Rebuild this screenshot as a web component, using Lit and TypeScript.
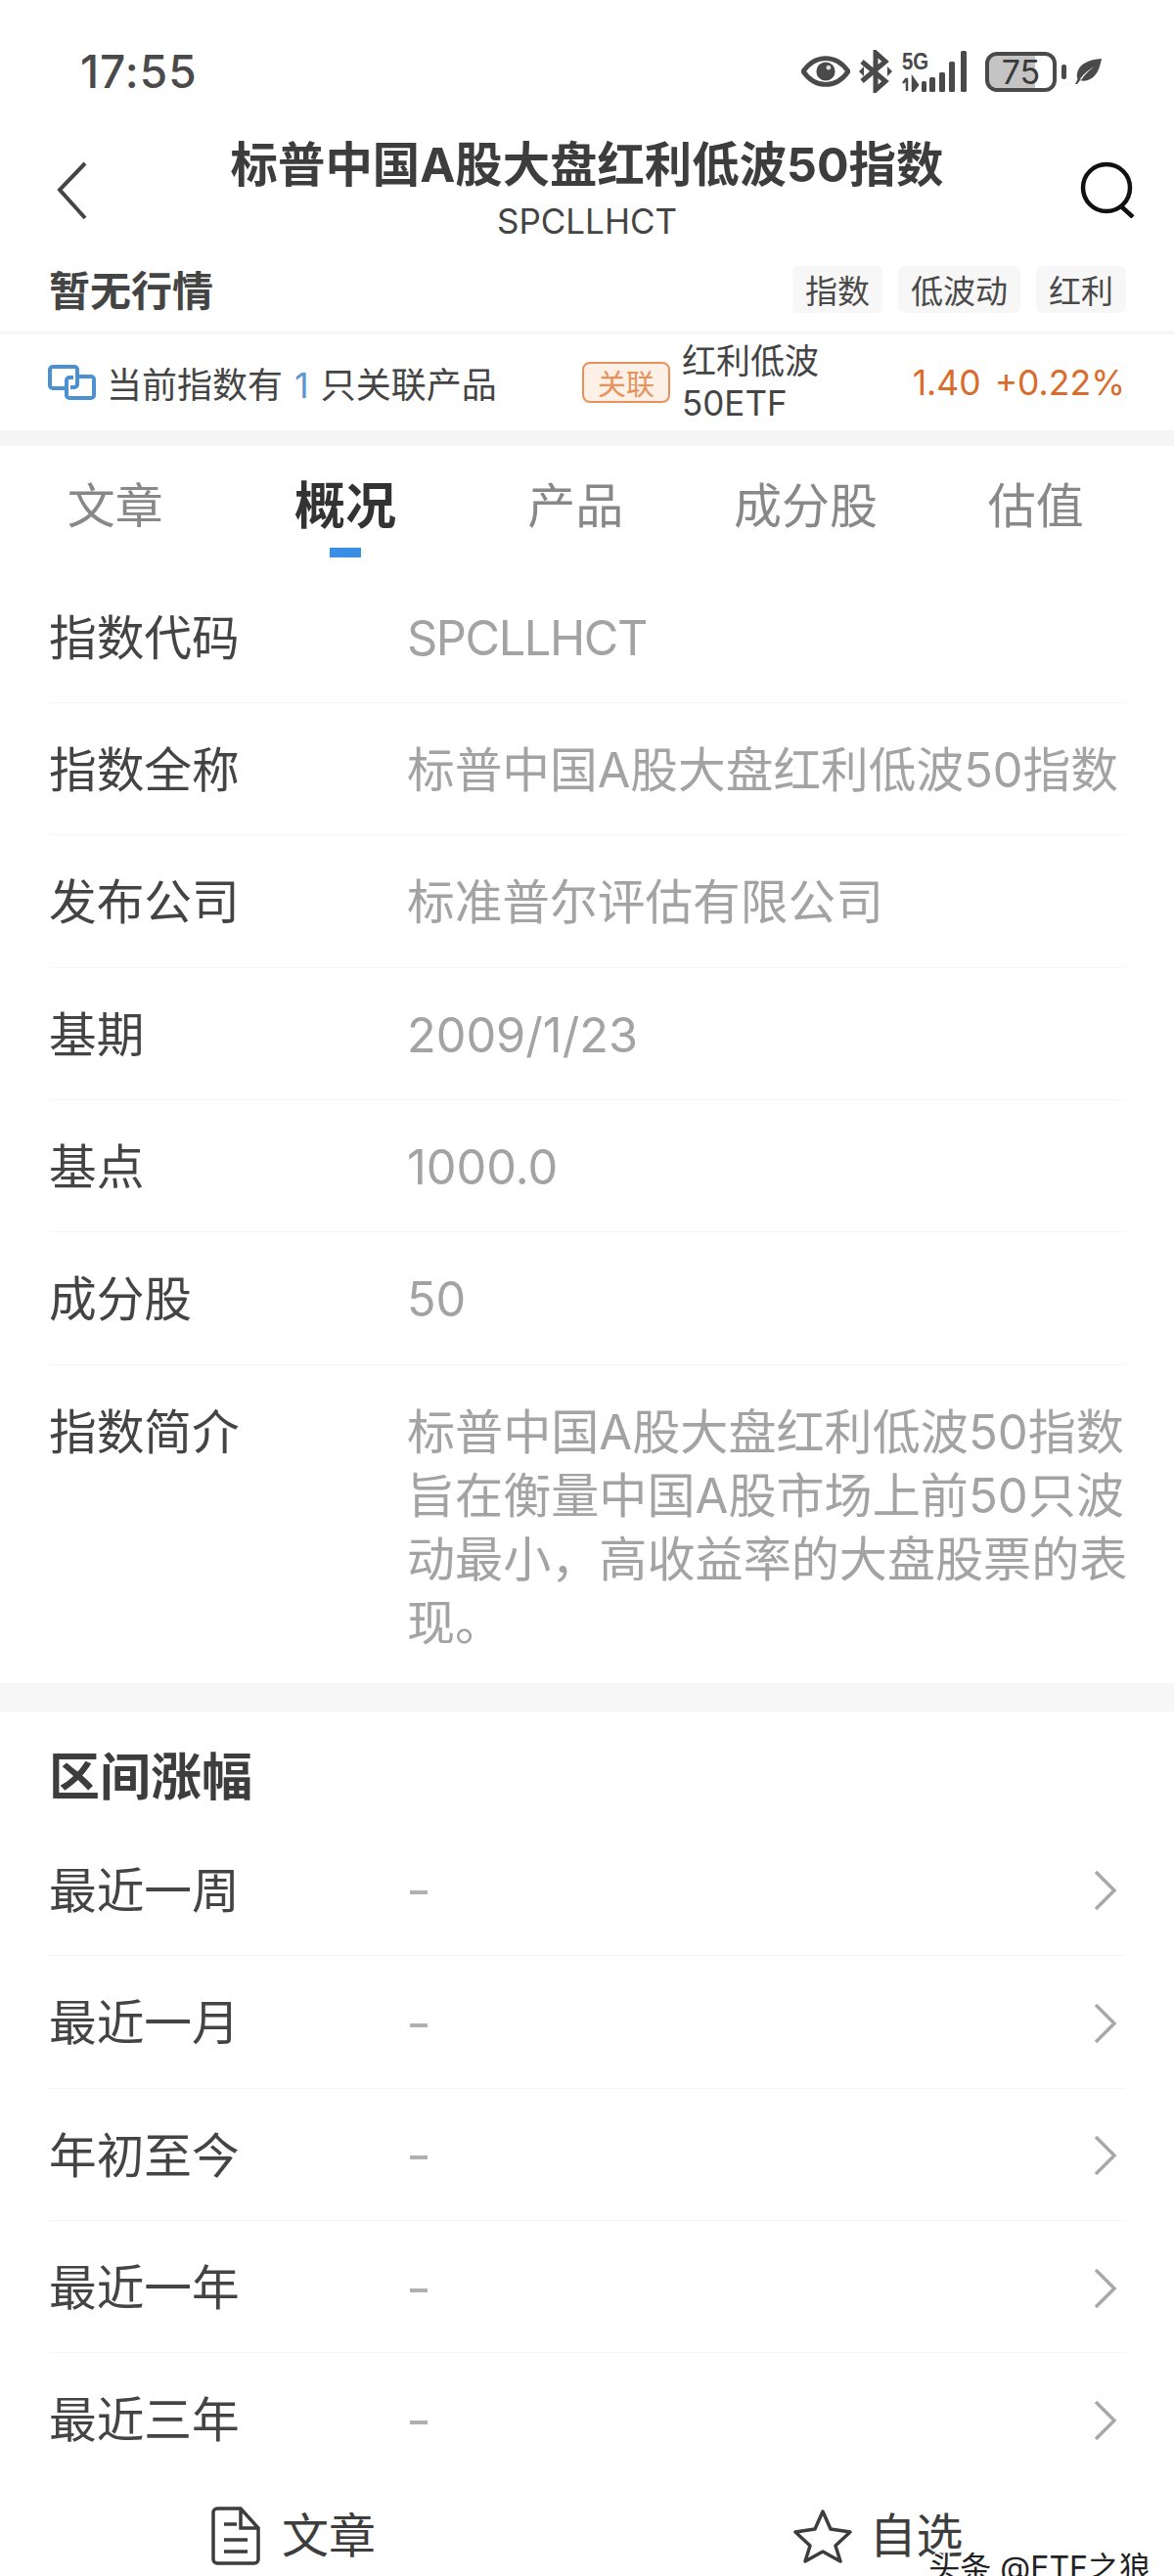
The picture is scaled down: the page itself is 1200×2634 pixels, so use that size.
import { LitElement, html, css } from "lit";
import { customElement } from "lit/decorators.js";

const details: [string, string][] = [
  ["指数代码", "SPCLLHCT"],
  ["指数全称", "标普中国A股大盘红利低波50指数"],
  ["发布公司", "标准普尔评估有限公司"],
  ["基期", "2009/1/23"],
  ["基点", "1000.0"],
  ["成分股", "50"],
];
const ranges = ["最近一周", "最近一月", "年初至今", "最近一年", "最近三年"];
const tabs = ["文章", "概况", "产品", "成分股", "估值"];

@customElement("app-root")
export class AppRoot extends LitElement {
  static styles = css`
    :host {
      display: block;
      position: relative;
      width: 1200px;
      height: 2634px;
      overflow: hidden;
      background: #fff;
      color: #444;
      font-family: "Inter", "Noto Sans CJK SC", sans-serif;
    }
    svg { display: block; flex: none; }
    .status {
      height: 114px;
      padding: 16px 74px 0 82px;
      display: flex;
      align-items: center;
      box-sizing: content-box;
    }
    .time { font-size: 46px; font-weight: 500; letter-spacing: 1px; color: #4a4a4a; }
    .status-icons { margin-left: auto; display: flex; align-items: center; }
    .gap-bt { margin-left: 9px; }
    .gap-nub { margin-left: 5px; }
    .gap-leaf { margin-left: 9px; }
    .five-g {
      font: 700 24px/22px "Liberation Sans", sans-serif;
      color: #4a4a4a;
      transform: scaleX(0.85);
      transform-origin: left top;
    }
    .signal { position: relative; width: 70px; height: 42px; margin-left: 10px; }
    .signal svg { position: absolute; left: 0; top: 0; }
    .signal .five-g { position: absolute; left: 0; top: 0; }
    .battery {
      position: relative;
      width: 73px;
      height: 41px;
      margin-left: 15px;
      box-sizing: border-box;
      border: 4px solid #4a4a4a;
      border-radius: 12px;
      overflow: hidden;
      background: linear-gradient(90deg, #c4c4c4 72%, #fff 72%);
      display: flex;
      align-items: center;
      justify-content: center;
      font-size: 34px;
      line-height: 33px;
      color: #3a3a3a;
    }
    .header { height: 120px; display: grid; grid-template-columns: 1fr auto 1fr; }
    .back { padding: 35px 0 0 58px; }
    .search { padding: 35px 40px 0 0; justify-self: end; }
    .title-box { text-align: center; padding-top: 9px; }
    .title { font-size: 48.4px; font-weight: 700; line-height: 60px; color: #3d3d3d; }
    .code { font-size: 35px; line-height: 42px; margin-top: 6px; color: #444; }
    .quote { height: 88px; padding: 0 49px 0 50px; display: flex; align-items: center; }
    .quote-label { font-size: 42px; font-weight: 700; color: #444; }
    .tags { margin-left: auto; display: flex; gap: 16px; margin-top: 3px; }
    .tag {
      height: 48px;
      padding: 0 13px;
      display: flex;
      align-items: center;
      background: #f7f7f7;
      border-radius: 6px;
      font-size: 33px;
      color: #4a4a4a;
    }
    .band-thin { height: 4px; background: #f7f7f7; }
    .band { height: 16px; background: #f5f5f5; }
    .band-big { height: 30px; background: #f7f7f7; }
    .link { height: 98px; padding: 0 50px 0 49px; display: flex; align-items: center; font-size: 36px; color: #444; }
    .link-left { display: flex; align-items: center; gap: 11px; width: 458px; flex: none; white-space: nowrap; }
    .link-count { color: #5b97cf; margin: 0 12px; }
    .rel {
      margin-left: 88px;
      width: 90px;
      height: 42px;
      box-sizing: border-box;
      border: 2px solid #e8915a;
      border-radius: 8px;
      background: #fdf0e6;
      color: #e8915a;
      font-size: 29px;
      display: flex;
      align-items: center;
      justify-content: center;
      flex: none;
    }
    .rel-name { margin-left: 12px; line-height: 43px; font-size: 35px; white-space: nowrap; }
    .price { margin-left: auto; color: #d96c2c; display: flex; gap: 14px; font-size: 35.5px; }
    .tabs { height: 127.5px; padding-top: 32px; box-sizing: border-box; display: grid; grid-template-columns: repeat(5, 235.3px); }
    .tab { display: flex; flex-direction: column; align-items: center; font-size: 49px; line-height: 60px; color: #888; }
    .tab.on { color: #333; font-weight: 700; font-size: 52px; }
    .tab.on::after { content: ""; width: 32px; height: 10px; margin-top: 12px; background: #3a8ee6; }
    .rows { padding: 0 50px; }
    .row {
      display: grid;
      grid-template-columns: 366px 1fr;
      padding: 36px 0 33.4px;
      border-bottom: 1px solid #f5f5f5;
      font-size: 48.7px;
      line-height: 65px;
      color: #444;
    }
    .row.last { border-bottom: 0; padding-bottom: 29.5px; }
    .value { color: #a3a3a3; white-space: nowrap; }
    .value.narrow { letter-spacing: -1.4px; }
    .value.wrap { white-space: normal; font-size: 49.1px; margin-right: -6px; }
    .section-title { padding: 37px 50px 16.5px; font-size: 52px; line-height: 60px; font-weight: 700; color: #3d3d3d; }
    .range { grid-template-columns: 366px 1fr auto; align-items: center; }
    .range.last { border-bottom: 0; }
    .dash { width: 18px; height: 4px; background: #b0b0b0; margin: 4px 0 0 3px; }
    .chev { margin-right: 8px; }
    .bar { display: grid; grid-template-columns: 1fr 1fr; padding-top: 26.5px; }
    .bar-item { display: flex; justify-content: center; align-items: center; gap: 22px; font-size: 48px; line-height: 60px; color: #3d3d3d; }
    .bar-item.fav { gap: 17px; padding-right: 4px; }
    .mark {
      position: absolute;
      right: 24px;
      bottom: -13px;
      font-size: 32px;
      line-height: 42px;
      color: #222;
      text-shadow: 2px 0 #fff, -2px 0 #fff, 0 2px #fff, 0 -2px #fff;
    }
  `;

  private statusIcons() {
    return html`<div class="status-icons">
      <svg width="50" height="34" viewBox="0 0 52 34">
        <path d="M2 17C9 7 17 3 26 3s17 4 24 14c-7 10-15 14-24 14S9 27 2 17z" fill="none" stroke="#4a4a4a" stroke-width="5" stroke-linejoin="round"/>
        <circle cx="26" cy="17" r="10" fill="#4a4a4a"/><circle cx="29" cy="13" r="2.5" fill="#ddd"/>
      </svg>
      <svg class="gap-bt" width="34" height="44" viewBox="0 0 34 44">
        <path d="M3 12l24 20-10 9V3l10 9L3 32" fill="none" stroke="#4a4a4a" stroke-width="5"/>
        <path d="M0 22l5-5v10zM34 22l-5-5v10z" fill="#4a4a4a"/>
      </svg>
      <div class="signal">
        <svg width="70" height="42" viewBox="0 0 70 42">
          <path d="M5 28v13M1 33l4-5M11 28v13l5-6z" stroke="#4a4a4a" stroke-width="2.5" fill="#4a4a4a"/>
          <rect x="20" y="31" width="5" height="11" rx="1.5" fill="#4a4a4a"/>
          <rect x="28" y="27" width="6" height="15" rx="1.5" fill="#4a4a4a"/>
          <rect x="38" y="22" width="6" height="20" rx="1.5" fill="#4a4a4a"/>
          <rect x="48" y="11" width="6" height="31" rx="1.5" fill="#4a4a4a"/>
          <rect x="60" y="0" width="6" height="42" rx="1.5" fill="#4a4a4a"/>
        </svg>
        <span class="five-g">5G</span>
      </div>
      <div class="battery">75</div>
      <svg class="gap-nub" width="5" height="15" viewBox="0 0 5 15"><rect width="5" height="15" rx="2" fill="#4a4a4a"/></svg>
      <svg class="gap-leaf" width="27" height="26" viewBox="0 0 27 26">
        <path d="M27 0C14 1 4 5 2 15c-.6 3 0 5 .5 6L0 26l2 0 3-4c2 1 5 1 8 0C22 19 25 10 27 0zM5 21C9 15 14 11 20 8 14 12 10 16 6 22z" fill="#4a4a4a"/>
      </svg>
    </div>`;
  }

  render() {
    return html`
      <div class="status"><span class="time">17:55</span>${this.statusIcons()}</div>
      <div class="header">
        <div class="back">
          <svg width="32" height="60" viewBox="0 0 32 60"><path d="M29 2L3 29l26 29" fill="none" stroke="#444" stroke-width="4"/></svg>
        </div>
        <div class="title-box">
          <div class="title">标普中国A股大盘红利低波50指数</div>
          <div class="code">SPCLLHCT</div>
        </div>
        <div class="search">
          <svg width="56" height="58" viewBox="0 0 56 58">
            <circle cx="27" cy="27" r="24" fill="none" stroke="#111" stroke-width="4.5"/>
            <path d="M42 46l12 11" fill="none" stroke="#111" stroke-width="4.5"/>
          </svg>
        </div>
      </div>
      <div class="quote">
        <span class="quote-label">暂无行情</span>
        <div class="tags">
          <span class="tag">指数</span><span class="tag">低波动</span><span class="tag">红利</span>
        </div>
      </div>
      <div class="band-thin"></div>
      <div class="link">
        <div class="link-left">
          <svg width="49" height="36" viewBox="0 0 49 36">
            <path d="M17 24H5a3 3 0 0 1-3-3V5a3 3 0 0 1 3-3h22a3 3 0 0 1 3 3v15a3 3 0 0 1-3 3h-4" fill="none" stroke="#4a90d2" stroke-width="4"/>
            <path d="M32 12h12a3 3 0 0 1 3 3v16a3 3 0 0 1-3 3H22a3 3 0 0 1-3-3V16a3 3 0 0 1 3-3h4" fill="none" stroke="#4a90d2" stroke-width="4"/>
          </svg>
          <span>当前指数有<span class="link-count">1</span>只关联产品</span>
        </div>
        <span class="rel">关联</span>
        <span class="rel-name">红利低波<br />50ETF</span>
        <span class="price"><span>1.40</span><span>+0.22%</span></span>
      </div>
      <div class="band"></div>
      <div class="tabs">
        ${tabs.map((t, i) => html`<div class="tab ${i === 1 ? "on" : ""}">${t}</div>`)}
      </div>
      <div class="rows">
        ${details.map(([k, v], i) => html`<div class="row"><span>${k}</span><span class="value ${i === 0 ? "narrow" : ""}">${v}</span></div>`)}
        <div class="row last">
          <span>指数简介</span>
          <span class="value wrap">标普中国A股大盘红利低波50指数旨在衡量中国A股市场上前50只波动最小，高收益率的大盘股票的表现。</span>
        </div>
      </div>
      <div class="band-big"></div>
      <div class="section-title">区间涨幅</div>
      <div class="rows">
        ${ranges.map((r, i) => html`<div class="row range ${i === ranges.length - 1 ? "last" : ""}">
          <span>${r}</span><span class="dash"></span>
          <svg class="chev" width="24" height="40" viewBox="0 0 24 40"><path d="M2 1l19 19L2 39" fill="none" stroke="#a8a8a8" stroke-width="3.5"/></svg>
        </div>`)}
      </div>
      <div class="bar">
        <div class="bar-item">
          <svg width="50" height="60" viewBox="0 0 50 60">
            <path d="M6 2h24l18 20v32a4 4 0 0 1-4 4H6a4 4 0 0 1-4-4V6a4 4 0 0 1 4-4zM30 2v20h18" fill="none" stroke="#3d3d3d" stroke-width="3.5"/>
            <path d="M13 18h13M13 34h24M13 46h24" fill="none" stroke="#3d3d3d" stroke-width="3.5"/>
          </svg>
          <span>文章</span>
        </div>
        <div class="bar-item fav">
          <svg width="60" height="56" viewBox="0 0 60 56">
            <path d="M30 3l8 18 20 3-15 14 5 16-18-10-18 10 5-16L2 24l20-3z" fill="none" stroke="#3d3d3d" stroke-width="3.5" stroke-linejoin="round"/>
          </svg>
          <span>自选</span>
        </div>
      </div>
      <div class="mark">头条 @ETF之狼</div>
    `;
  }
}
